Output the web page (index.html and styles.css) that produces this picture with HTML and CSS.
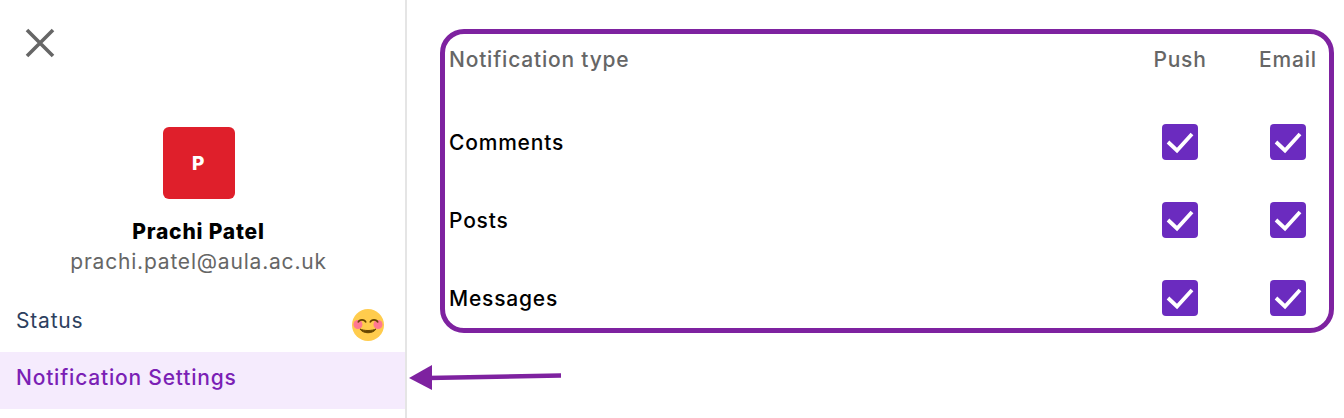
FILE: index.html
```html
<!DOCTYPE html>
<html lang="en">
<head>
  <meta charset="UTF-8" />
  <meta name="viewport" content="width=device-width, initial-scale=1.0" />
  <title>Notification Settings</title>
  <link rel="stylesheet" href="styles.css">
</head>
<body>
  <div class="sidebar">
    <button class="close-btn" aria-label="Close">
      <svg width="30" height="30" viewBox="0 0 30 30"><path d="M2 2L28 28M28 2L2 28" fill="none" stroke="#666" stroke-width="3.6"/></svg>
    </button>
    <div class="profile">
      <div class="avatar">P</div>
      <div class="name">Prachi Patel</div>
      <div class="email">prachi.patel@aula.ac.uk</div>
    </div>
    <ul class="menu">
      <li class="menu-status">
        <span>Status</span>
        <svg class="emoji" width="32" height="32" viewBox="0 0 32 32">
          <circle cx="16" cy="16" r="16" fill="#ffcc4d"/>
          <circle cx="6" cy="15.500" r="4.500" fill="#ff7892"/>
          <circle cx="26" cy="15.500" r="4.500" fill="#ff7892"/>
          <path d="M6 13.500c1.500-3.500 6.500-3.500 8 0M18 13.500c1.500-3.500 6.500-3.500 8 0" fill="none" stroke="#664500" stroke-width="1.600"/>
          <path d="M8 20c3 5 13 5 16 0c-4 2-12 2-16 0z" fill="#664500" stroke="#664500" stroke-width="1"/>
        </svg>
      </li>
      <li class="active">Notification Settings</li>
    </ul>
  </div>
  <div class="main-panel">
    <div class="settings-box">
      <div class="settings-head">Notification type</div>
      <div class="settings-head col">Push</div>
      <div class="settings-head col">Email</div>

      <div class="settings-label">Comments</div>
      <div class="col"><span class="check"><svg width="36" height="36" viewBox="0 0 36 36"><path d="M6 18L15 26.500L30 10" fill="none" stroke="#fff" stroke-width="3.800"/></svg></span></div>
      <div class="col"><span class="check"><svg width="36" height="36" viewBox="0 0 36 36"><path d="M6 18L15 26.500L30 10" fill="none" stroke="#fff" stroke-width="3.800"/></svg></span></div>

      <div class="settings-label">Posts</div>
      <div class="col"><span class="check"><svg width="36" height="36" viewBox="0 0 36 36"><path d="M6 18L15 26.500L30 10" fill="none" stroke="#fff" stroke-width="3.800"/></svg></span></div>
      <div class="col"><span class="check"><svg width="36" height="36" viewBox="0 0 36 36"><path d="M6 18L15 26.500L30 10" fill="none" stroke="#fff" stroke-width="3.800"/></svg></span></div>

      <div class="settings-label">Messages</div>
      <div class="col"><span class="check"><svg width="36" height="36" viewBox="0 0 36 36"><path d="M6 18L15 26.500L30 10" fill="none" stroke="#fff" stroke-width="3.800"/></svg></span></div>
      <div class="col"><span class="check"><svg width="36" height="36" viewBox="0 0 36 36"><path d="M6 18L15 26.500L30 10" fill="none" stroke="#fff" stroke-width="3.800"/></svg></span></div>
    </div>
    <svg class="arrow" width="156" height="30" viewBox="0 0 156 30">
      <path d="M153 12.500L20 15" fill="none" stroke="#7e22a0" stroke-width="4.500"/>
      <path d="M1 15L24 2V27z" fill="#7e22a0"/>
    </svg>
  </div>
</body>
</html>
```

FILE: styles.css
```css
* {
  box-sizing: border-box;
  margin: 0;
  padding: 0;
}
body {
  font-family: "Inter", "Liberation Sans", sans-serif;
  font-size: 21px;
  letter-spacing: 0.8px;
  background-color: #ffffff;
  color: #000000;
  display: flex;
  height: 100vh;
  overflow: hidden;
}
.sidebar {
  width: 407px;
  flex-shrink: 0;
  border-right: 2px solid #e5e5e5;
}
.close-btn {
  display: block;
  margin: 28px 0 0 25px;
  background: none;
  border: none;
  height: 30px;
}
.profile {
  margin-top: 69px;
  padding-right: 8px;
  display: flex;
  flex-direction: column;
  align-items: center;
}
.avatar {
  width: 72px;
  height: 72px;
  border-radius: 6px;
  background-color: #df1f2b;
  color: #ffffff;
  font-size: 19px;
  font-weight: 800;
  display: flex;
  align-items: center;
  justify-content: center;
}
.name {
  margin-top: 20px;
  line-height: 26px;
  font-weight: 800;
}
.email {
  margin-top: 4px;
  line-height: 26px;
  color: #666666;
}
.menu {
  list-style: none;
  margin-top: 20px;
}
.menu li {
  height: 57px;
  padding: 0 21px 0 16px;
  display: flex;
  align-items: center;
}
.menu-status {
  color: #2d3f5e;
  justify-content: space-between;
}
.menu-status span {
  margin-top: -7px;
}
.menu-status .emoji {
  margin-top: 3px;
}
.menu li.active {
  padding-bottom: 7px;
  background-color: #f5ebfd;
  color: #7b1fb5;
  font-weight: 500;
}
.main-panel {
  flex-grow: 1;
  padding: 29px 10px 0 33px;
  position: relative;
}
.settings-box {
  height: 304px;
  border: 5px solid #7e22a0;
  border-radius: 24px;
  padding: 7px 5px 0 4px;
  display: grid;
  grid-template-columns: 1fr 72px 72px;
  grid-template-rows: 41px repeat(3, 36px);
  column-gap: 36px;
  row-gap: 42px;
  align-items: center;
}
.settings-head {
  align-self: start;
  line-height: 38px;
  font-weight: 500;
  color: #666666;
}
.settings-label {
  font-weight: 500;
}
.col {
  display: flex;
  justify-content: center;
}
.check {
  display: block;
  width: 36px;
  height: 36px;
  border-radius: 4px;
  background-color: #6b2bbf;
}
.check svg {
  display: block;
}
.arrow {
  position: absolute;
  left: 1px;
  top: 363px;
}
```
